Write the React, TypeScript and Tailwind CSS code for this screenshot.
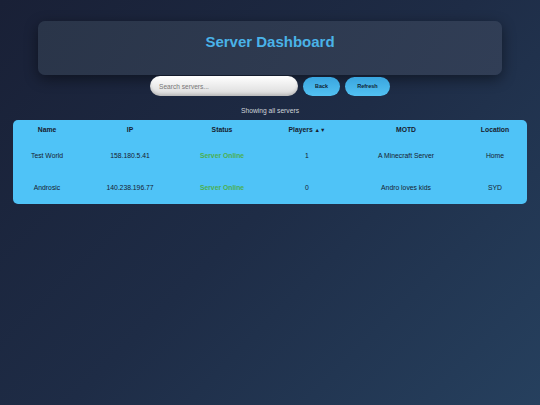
import { FC } from "react";

type Server = {
  name: string;
  ip: string;
  status: string;
  players: number;
  motd: string;
  location: string;
};

const servers: Server[] = [
  { name: "Test World", ip: "158.180.5.41", status: "Server Online", players: 1, motd: "A Minecraft Server", location: "Home" },
  { name: "Androsic", ip: "140.238.196.77", status: "Server Online", players: 0, motd: "Andro loves kids", location: "SYD" },
];

const App: FC = () => {
  return (
    <div className="min-h-[405px] w-full bg-[linear-gradient(135deg,#192036_0%,#1e2c46_50%,#26405e_100%)] font-['Liberation_Sans',Arial,sans-serif] pt-[21px] px-[13px]">
      <div className="mx-[25px] h-[54px] rounded-[7px] bg-[linear-gradient(120deg,#2a3549,#313e56)] shadow-[0_4px_14px_rgba(0,0,0,0.45)] flex items-center justify-center">
        <h1 className="text-[15px] font-bold text-[#4ab3e8] -mt-[12px]">Server Dashboard</h1>
      </div>
      <div className="flex justify-center items-center gap-[5px] mt-[1px]">
        <input
          type="text"
          placeholder="Search servers..."
          className="w-[148px] h-[20px] rounded-full bg-[linear-gradient(180deg,#ffffff,#d9d9d9)] pl-[9px] text-[6.6px] text-gray-700 placeholder:text-[#777] focus:outline-none shadow-[inset_0_-2px_3px_rgba(0,0,0,0.15)]"
        />
        <button className="w-[37px] h-[19px] rounded-full bg-[linear-gradient(180deg,#3aa5df,#52c1f2)] text-[5.4px] font-bold text-[#0f2233]">
          Back
        </button>
        <button className="w-[45px] h-[19px] rounded-full bg-[linear-gradient(180deg,#3aa5df,#52c1f2)] text-[5.5px] font-bold text-[#0f2233]">
          Refresh
        </button>
      </div>
      <p className="text-center text-[6.7px] text-[#d0d4da] mt-[12px] leading-none">Showing all servers</p>
      <div className="mt-[5px] rounded-[5px] bg-[#4fc3f7] overflow-hidden">
        <table className="w-[514px] table-fixed text-[6.8px] text-[#17202e] text-center border-collapse">
          <colgroup>
            <col className="w-[68px]" />
            <col className="w-[98px]" />
            <col className="w-[86px]" />
            <col className="w-[84px]" />
            <col className="w-[114px]" />
            <col className="w-[64px]" />
          </colgroup>
          <thead>
            <tr className="h-[20px] font-bold">
              <th>Name</th>
              <th>IP</th>
              <th>Status</th>
              <th>
                Players <span className="text-[5.5px]">▲▼</span>
              </th>
              <th>MOTD</th>
              <th>Location</th>
            </tr>
          </thead>
          <tbody>
            {servers.map((s) => (
              <tr key={s.ip} className="h-[32px]">
                <td>{s.name}</td>
                <td>{s.ip}</td>
                <td className="font-bold text-[#4caf50]">{s.status}</td>
                <td>{s.players}</td>
                <td>{s.motd}</td>
                <td>{s.location}</td>
              </tr>
            ))}
          </tbody>
        </table>
      </div>
    </div>
  );
};

export default App;
